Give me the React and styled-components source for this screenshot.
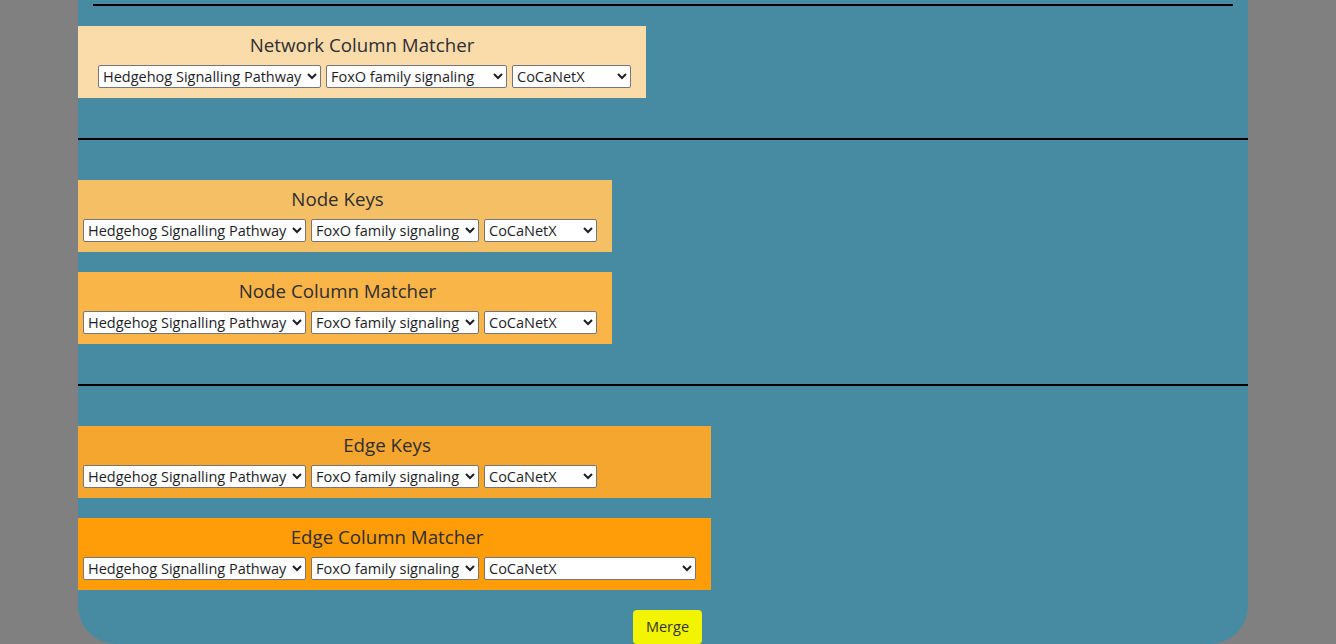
import React from 'react';
import styled, { createGlobalStyle } from 'styled-components';

const GlobalStyle = createGlobalStyle`
    html, body {
        margin: 0;
        padding: 0;
        background: #808080;
        font-family: "Open Sans", "Liberation Sans", sans-serif;
        overflow: hidden;
    }
`;

const Panel = styled.div`
    width: 1170px;
    height: 644px;
    margin-left: 78px;
    background: #478ba2;
    border-radius: 0 0 38px 38px;
    padding-top: 4px;
    box-sizing: border-box;
    display: flex;
    flex-direction: column;
    align-items: flex-start;
`;

const Rule = styled.div`
    align-self: stretch;
    height: 2px;
    background: #000;
    margin: ${p => p.$inset ? '0 15px' : '0'};
`;

const Section = styled.div`
    display: flex;
    flex-direction: column;
    gap: 20px;
    margin: ${p => p.$margin};
`;

const Box = styled.div`
    width: ${p => p.$width}px;
    height: 72px;
    box-sizing: border-box;
    background: ${p => p.$bg};
    padding: ${p => p.$wide ? '7px 20px 0 20px' : '7px 20px 0 5px'};
`;

const Title = styled.h3`
    margin: 0 0 8px;
    font-size: 18.72px;
    font-weight: 400;
    line-height: 24px;
    color: #2e2e33;
    text-align: center;
`;

const Row = styled.div`
    display: flex;
    gap: 5px;
`;

const Select = styled.select`
    flex-shrink: 0;
    width: ${p => p.$w}px;
    height: 23px;
    font-family: "Open Sans", "Liberation Sans", sans-serif;
    font-size: 14.5px;
    color: #1e1e28;
    background: #fff;
    border: 1px solid #767676;
    border-radius: 2px;
    padding: 0;
`;

const MergeButton = styled.button`
    margin: 20px 0 0 555px;
    width: 69px;
    height: 34px;
    background: #f3f500;
    border: none;
    border-radius: 4px;
    font-family: "Open Sans", "Liberation Sans", sans-serif;
    font-size: 14.5px;
    color: #333;
    padding: 0 0 2px;
`;

const Matcher = ({ title, bg, width, widths, wide }) => (
    <Box $bg={bg} $width={width} $wide={wide}>
        <Title>{title}</Title>
        <Row>
            <Select $w={widths[0]} defaultValue="h">
                <option value="h">Hedgehog Signalling Pathway</option>
            </Select>
            <Select $w={widths[1]} defaultValue="f">
                <option value="f">FoxO family signaling</option>
            </Select>
            <Select $w={widths[2]} defaultValue="c">
                <option value="c">CoCaNetX</option>
            </Select>
        </Row>
    </Box>
);

const App = () => (
    <>
        <GlobalStyle />
        <Panel>
            <Rule $inset />
            <Section $margin="20px 0 40px">
                <Matcher title="Network Column Matcher" bg="#fadcab" width={568} widths={[223, 181, 119]} wide />
            </Section>
            <Rule />
            <Section $margin="40px 0">
                <Matcher title="Node Keys" bg="#f5bf66" width={534} widths={[223, 168, 113]} />
                <Matcher title="Node Column Matcher" bg="#fab548" width={534} widths={[223, 168, 113]} />
            </Section>
            <Rule />
            <Section $margin="40px 0 0">
                <Matcher title="Edge Keys" bg="#f4a62f" width={633} widths={[223, 168, 113]} />
                <Matcher title="Edge Column Matcher" bg="#ff9d08" width={633} widths={[223, 168, 212]} />
            </Section>
            <MergeButton>Merge</MergeButton>
        </Panel>
    </>
);

export default App;
